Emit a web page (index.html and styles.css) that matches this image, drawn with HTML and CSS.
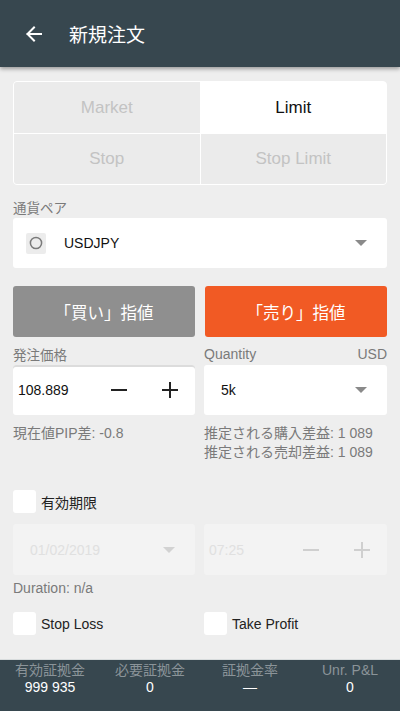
FILE: index.html
```html
<!DOCTYPE html>
<html lang="ja">
<head>
<meta charset="utf-8">
<title>新規注文</title>
<link rel="stylesheet" href="styles.css">
</head>
<body>
<div class="app">
  <header class="topbar">
    <svg class="back" width="18" height="18" viewBox="0 0 18 18"><path d="M16 9H2.5M9 2.5L2.5 9L9 15.5" fill="none" stroke="#fff" stroke-width="2" stroke-linecap="square"/></svg>
    <h1 class="title">新規注文</h1>
  </header>
  <main class="content">
    <div class="types">
      <div class="type">Market</div>
      <div class="type active">Limit</div>
      <div class="type">Stop</div>
      <div class="type">Stop Limit</div>
    </div>

    <div class="label">通貨ペア</div>
    <div class="field pair">
      <span class="pair-icon"><svg width="14" height="14" viewBox="0 0 14 14"><circle cx="7" cy="7" r="5.6" fill="none" stroke="#7a7a7a" stroke-width="1.5"/></svg></span>
      <span class="pair-name">USDJPY</span>
      <span class="caret"></span>
    </div>

    <div class="actions">
      <div class="btn buy">「買い」指値</div>
      <div class="btn sell">「売り」指値</div>
    </div>

    <div class="two">
      <div class="col">
        <div class="label">発注価格</div>
        <div class="field price">
          <span class="value">108.889</span>
          <span class="stepper">
            <svg width="16" height="16" viewBox="0 0 16 16"><path d="M0 8H16" stroke="#222" stroke-width="2"/></svg>
            <svg width="16" height="16" viewBox="0 0 16 16"><path d="M0 8H16M8 0V16" stroke="#222" stroke-width="2"/></svg>
          </span>
        </div>
        <div class="info">現在値PIP差: -0.8</div>
      </div>
      <div class="col">
        <div class="label split"><span>Quantity</span><span>USD</span></div>
        <div class="field qty">
          <span class="value">5k</span>
          <span class="caret"></span>
        </div>
        <div class="info">推定される購入差益: 1 089<br>推定される売却差益: 1 089</div>
      </div>
    </div>

    <div class="check-row expiry">
      <span class="box"></span><span class="check-label">有効期限</span>
    </div>

    <div class="two disabled-row">
      <div class="field disabled date">
        <span class="value">01/02/2019</span>
        <span class="caret light"></span>
      </div>
      <div class="field disabled time">
        <span class="value">07:25</span>
        <span class="stepper">
          <svg width="16" height="16" viewBox="0 0 16 16"><path d="M0 8H16" stroke="#cfcfcf" stroke-width="2"/></svg>
          <svg width="16" height="16" viewBox="0 0 16 16"><path d="M0 8H16M8 0V16" stroke="#cfcfcf" stroke-width="2"/></svg>
        </span>
      </div>
    </div>

    <div class="duration">Duration: n/a</div>

    <div class="two checks">
      <div class="check-row"><span class="box"></span><span class="check-label">Stop Loss</span></div>
      <div class="check-row"><span class="box"></span><span class="check-label">Take Profit</span></div>
    </div>
  </main>
  <footer class="stats">
    <div class="stat"><div class="stat-label">有効証拠金</div><div class="stat-value">999 935</div></div>
    <div class="stat"><div class="stat-label">必要証拠金</div><div class="stat-value">0</div></div>
    <div class="stat"><div class="stat-label">証拠金率</div><div class="stat-value">—</div></div>
    <div class="stat"><div class="stat-label">Unr. P&amp;L</div><div class="stat-value">0</div></div>
  </footer>
</div>
</body>
</html>
```

FILE: styles.css
```css
* { box-sizing: border-box; }
html, body { margin: 0; padding: 0; }
body {
  background: #eeeeee;
  font-family: "Liberation Sans", Arial, "Noto Sans CJK JP", sans-serif;
  color: #222;
}
.app {
  width: 400px;
  height: 711px;
  display: flex;
  flex-direction: column;
  overflow: hidden;
}
.topbar {
  height: 67px;
  flex: none;
  background: #37474f;
  display: flex;
  align-items: center;
  padding-left: 25px;
  box-shadow: 0 2px 4px rgba(0,0,0,0.35);
  position: relative;
  z-index: 1;
}
.back { display: block; margin-right: 26px; }
.title {
  margin: 0;
  font-family: "Noto Sans CJK JP", sans-serif;
  font-weight: 400;
  font-size: 19px;
  color: #fff;
}
.content {
  flex: 1;
  padding: 14px 13px 0;
  display: flex;
  flex-direction: column;
}
.types {
  display: grid;
  grid-template-columns: 1fr 1fr;
  grid-template-rows: 51px 50px;
  gap: 1px;
  background: #fff;
  border: 1px solid #fff;
  border-radius: 4px;
  overflow: hidden;
}
.type {
  background: #ebebeb;
  color: #c3c3c3;
  font-size: 17px;
  display: flex;
  align-items: center;
  justify-content: center;
}
.type.active { background: #fff; color: #111; }
.label {
  font-family: "Noto Sans CJK JP", sans-serif;
  font-size: 13.5px;
  line-height: 16px;
  color: #7a7a7a;
  margin-top: 14px;
  margin-bottom: 3px;
}
.label.split { display: flex; justify-content: space-between; font-family: "Liberation Sans", Arial, sans-serif; font-size: 14px; }
.field {
  height: 50px;
  background: #fff;
  border-radius: 3px;
  display: flex;
  align-items: center;
}
.pair { padding: 0 20px 0 13px; }
.pair-icon {
  width: 20px;
  height: 21px;
  background: #ececec;
  border-radius: 2px;
  display: flex;
  align-items: center;
  justify-content: center;
  margin-right: 18px;
}
.pair-icon svg { display: block; }
.pair-name { font-size: 14px; color: #111; flex: 1; }
.caret {
  width: 0; height: 0;
  border-left: 6px solid transparent;
  border-right: 6px solid transparent;
  border-top: 6px solid #8a8a8a;
  margin-left: auto;
}
.caret.light { border-top-color: #d2d2d2; }
.actions {
  display: grid;
  grid-template-columns: 1fr 1fr;
  gap: 10px;
  margin-top: 18px;
}
.btn {
  height: 51px;
  border-radius: 3px;
  display: flex;
  align-items: center;
  justify-content: center;
  font-family: "Noto Sans CJK JP", sans-serif;
  font-size: 16.5px;
  color: #fff;
}
.buy { background: #8f8f8f; }
.sell { background: #f15a24; }
.two {
  display: grid;
  grid-template-columns: 182px 1fr;
  gap: 9px;
}
.col { display: flex; flex-direction: column; }
.two > .col > .label { margin-top: 9px; }
.price { padding: 0 17px 0 5px; box-shadow: inset 0 2px 0 #dcdcdc; }
.value { font-size: 14px; color: #111; }
.stepper { margin-left: auto; display: flex; gap: 35px; }
.stepper svg { display: block; }
.qty { padding: 0 20px 0 17px; }
.info {
  margin-top: 9px;
  font-family: "Liberation Sans", Arial, "Noto Sans CJK JP", sans-serif;
  font-size: 14px;
  line-height: 19px;
  color: #7a7a7a;
}
.check-row {
  display: flex;
  align-items: center;
  height: 23px;
}
.expiry { margin-top: 28px; }
.box {
  width: 23px;
  height: 23px;
  background: #fff;
  border-radius: 3px;
  margin-right: 5px;
  flex: none;
}
.check-label {
  font-family: "Liberation Sans", Arial, "Noto Sans CJK JP", sans-serif;
  font-size: 14px;
  color: #222;
}
.disabled-row { margin-top: 11px; }
.disabled { background: #f3f3f3; height: 51px; }
.date { padding: 0 20px 0 17px; }
.date .value, .time .value { color: #e0e0e0; }
.time { padding: 0 17px 0 5px; }
.duration {
  margin-top: 5px;
  font-size: 14px;
  line-height: 16px;
  color: #7a7a7a;
}
.checks { margin-top: 16px; }
.stats {
  height: 52px;
  flex: none;
  background: #37474f;
  border-top: 1px solid #d8dcdd;
  display: grid;
  grid-template-columns: repeat(4, 1fr);
  padding-top: 2px;
}
.stat { text-align: center; }
.stat-label {
  font-family: "Liberation Sans", Arial, "Noto Sans CJK JP", sans-serif;
  font-size: 14px;
  line-height: 16px;
  color: #8b9499;
}
.stat-value {
  font-size: 14px;
  line-height: 18px;
  color: #fff;
}
```
